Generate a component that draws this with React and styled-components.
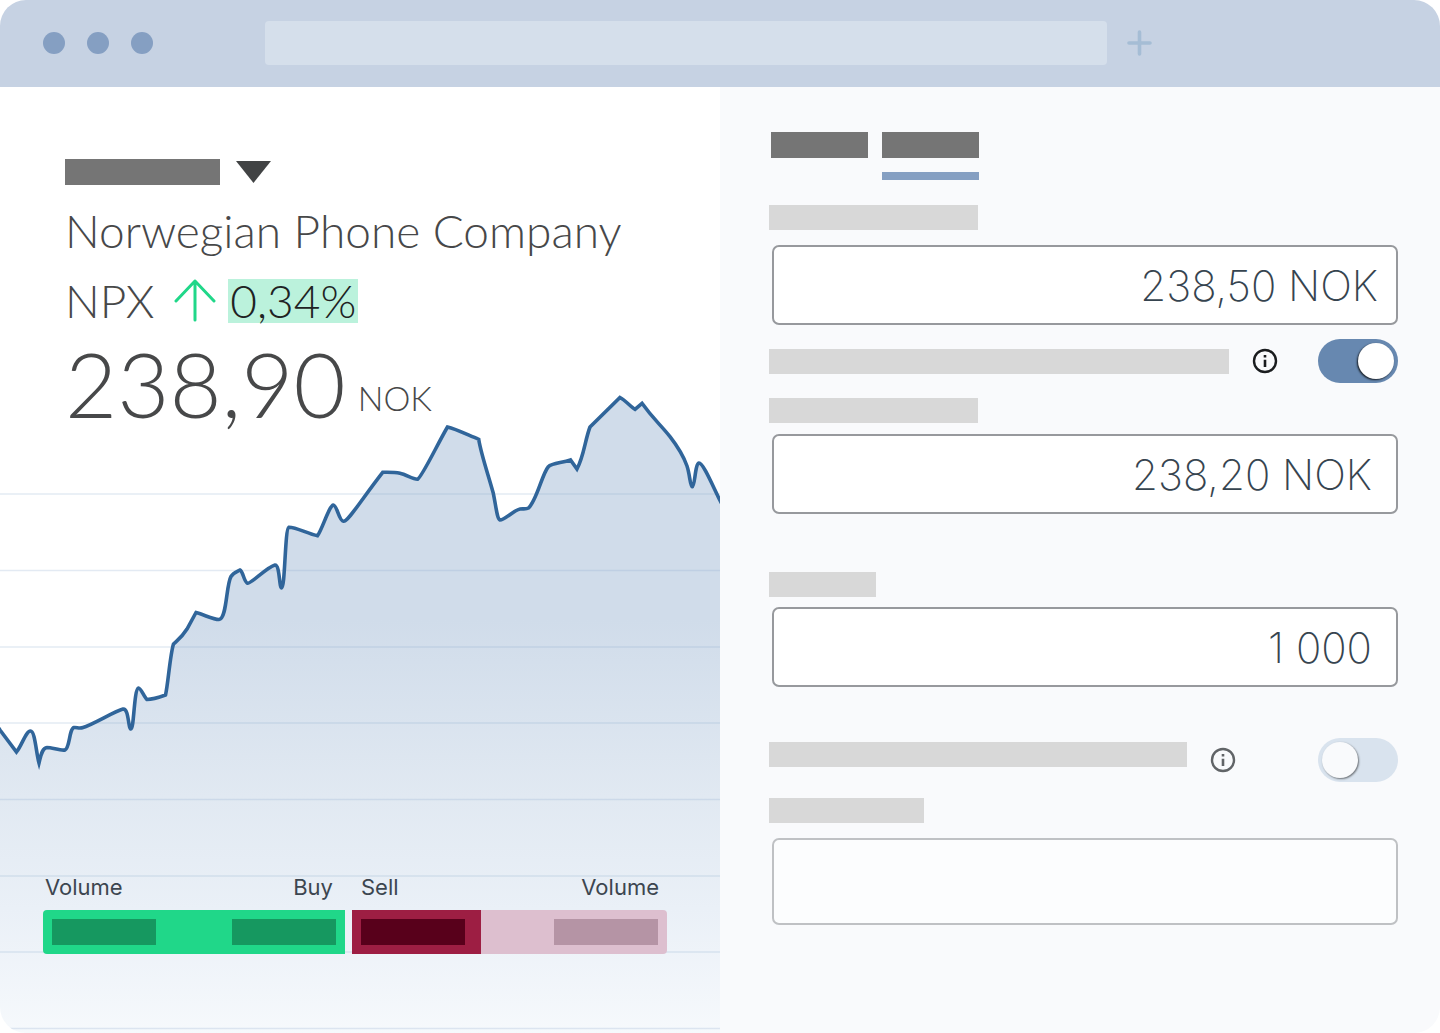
import { useState } from "react";
import styled, { createGlobalStyle } from "styled-components";

const GlobalStyle = createGlobalStyle`
  * {
    box-sizing: border-box;
  }
  body {
    margin: 0;
    background-color: #fff;
    font-family: "Inter", "Liberation Sans", sans-serif;
  }
  button {
    padding: 0;
    border: none;
    background: none;
    cursor: pointer;
  }
`;

const Window = styled.div`
  display: flex;
  flex-direction: column;
  min-height: 100vh;
  border-radius: 26px;
  overflow: hidden;
`;

/* browser bar */
const BrowserBar = styled.header`
  display: flex;
  align-items: center;
  height: 87px;
  padding: 0 20% 1px 43px;
  background-color: #c6d2e3;
`;

const Dots = styled.div`
  display: flex;
  gap: 22px;
  margin-right: 112px;
`;

const Dot = styled.span`
  width: 22px;
  height: 22px;
  border-radius: 50%;
  background-color: #859fc2;
`;

const Address = styled.input`
  flex: 1;
  min-width: 0;
  height: 44px;
  margin-right: 20px;
  padding: 0 16px;
  border: none;
  border-radius: 4px;
  background-color: #d5dfeb;
`;

const NewTab = styled.button`
  display: flex;
`;

const Main = styled.main`
  flex: 1;
  display: grid;
  grid-template-columns: 1fr 1fr;
`;

/* left side */
const StockPanel = styled.section`
  position: relative;
  display: flex;
  flex-direction: column;
  justify-content: space-between;
  padding: 72px 53px 79px 43px;
  background-color: #fff;
`;

const Chart = styled.svg`
  position: absolute;
  inset: 0;
  width: 100%;
  height: 100%;
`;

const StockInfo = styled.div`
  position: relative;
  padding-left: 22px;
  color: #474849;
  font-family: "Lato", sans-serif;
  font-weight: 300;
`;

const Bar = styled.span`
  display: block;
  width: ${({ $width }) => $width}px;
  height: 26px;
  background-color: ${({ $color }) => $color || "#757575"};
`;

const Picker = styled.button`
  display: flex;
  align-items: center;
  gap: 16px;
`;

const Name = styled.h1`
  margin: 16px 0 0;
  font-size: 46px;
  line-height: 60px;
  font-weight: 300;
  white-space: nowrap;
`;

const Change = styled.div`
  display: flex;
  align-items: center;
  margin-top: 18px;
  font-size: 46px;
  line-height: 44px;
`;

const Arrow = styled.svg`
  margin: 0 12px 0 20px;
`;

const Percent = styled.span`
  padding: 0 2px;
  background-color: #bbf2dc;
  color: #202223;
`;

const Price = styled.div`
  display: flex;
  align-items: flex-end;
  gap: 12px;
  margin-top: 12px;
  font-size: 90px;
  line-height: 96px;
  white-space: nowrap;
`;

const Currency = styled.span`
  font-size: 34px;
  line-height: 66px;
`;

const OrderBook = styled.div`
  position: relative;
  display: grid;
  grid-template-columns: 302fr 315fr;
  column-gap: 7px;
  row-gap: 10px;
  color: #3c4650;
  font-size: 22px;
  line-height: 26px;
`;

const Legend = styled.div`
  display: flex;
  justify-content: space-between;
  padding: 0 ${({ $end }) => $end}px 0 ${({ $start }) => $start}px;
`;

const Buy = styled.div`
  display: flex;
  justify-content: space-between;
  padding: 9px;
  border-radius: 4px 0 0 4px;
  background-color: #20d789;
`;

const Sell = styled.div`
  display: flex;
  justify-content: space-between;
  padding: 9px;
  border-radius: 0 4px 4px 0;
  background: linear-gradient(to right, #9d1e43 41%, #ddbfcf 41%);
`;

/* right side */
const OrderPanel = styled.form`
  padding: 45px 42px 45px 49px;
  background-color: #f9fafc;
`;

const Tabs = styled.div`
  display: flex;
  gap: 14px;
  padding-left: 2px;
`;

const Tab = styled.button`
  height: 48px;
  padding-bottom: 14px;
  border-bottom: 8px solid ${({ $active }) => ($active ? "#859fc2" : "transparent")};
`;

const Label = styled.label`
  display: block;
  width: ${({ $width }) => $width}px;
  height: 25px;
  margin-bottom: ${({ $raised }) => ($raised ? 12 : 0)}px;
  background-color: #d8d8d8;
`;

const Field = styled.div`
  display: flex;
  flex-direction: column;
  gap: ${({ $gap }) => $gap}px;
  margin-top: ${({ $top }) => $top}px;
`;

const Input = styled.input`
  width: calc(100% - 3px);
  height: ${({ $tall }) => ($tall ? 87 : 80)}px;
  margin-left: 3px;
  padding: 0 ${({ $end }) => $end}px 0 16px;
  border: 2px solid ${({ $muted }) => ($muted ? "#bfc1c4" : "#97999d")};
  border-radius: 7px;
  background-color: ${({ $muted }) => ($muted ? "#fcfdfe" : "#fff")};
  color: #36444f;
  font-family: "Inter", sans-serif;
  font-size: 42px;
  font-weight: 200;
  text-align: right;
`;

const Row = styled.div`
  display: flex;
  align-items: center;
  margin-top: ${({ $top }) => $top}px;
`;

const InfoButton = styled.button`
  display: flex;
  margin: 0 auto 0 23px;
  color: ${({ $muted }) => ($muted ? "#616467" : "#1a1c1e")};
`;

const Switch = styled.input`
  appearance: none;
  display: flex;
  align-items: center;
  width: 80px;
  height: 44px;
  margin: 0;
  padding: 0 4px;
  border-radius: 22px;
  background-color: #d9e3ee;
  cursor: pointer;

  &::before {
    content: "";
    width: 36px;
    height: 36px;
    border-radius: 50%;
    background-color: #f9fafc;
    box-shadow: 1px 1px 2px rgba(0, 0, 0, 0.5);
  }
  &:checked {
    justify-content: flex-end;
    background-color: #6788b0;
  }
  &:checked::before {
    background-color: #fff;
    box-shadow: -1px 1px 2px rgba(0, 0, 0, 0.8);
  }
`;

const line =
  "M-2 727 L0 730 L16.5 752 C22 745 26 731 30.5 731 C35 731 36 752 39 763 C41 755 42 748 47 747.5 C52 747.5 61 751 65 750 C70 748 69 729 74 727.5 C77 727 79 729 83 727.5 C92 725 115 711 123 709 C129 708 128 729 131 729 C134 729 134 689 138.5 688 C141 688 144 697 147 699.5 C153 699.5 160 697 165.5 695 C168 685 170 655 173.5 644 C179 639 182 637 187 629 L196 612.5 C205 615 213 619.5 219 619.5 C227 619 226 585 231 576.5 C233 573 236 572 240 570 C243 571 244 582 247.5 583.3 C251 584 267 567 275 565 C280 565 279 588 281.7 588 C285 588 285 529 288.7 527.3 C296 527 308 534 317.5 535.7 C322 530 329 506 333.3 505 C337 505 339 521 343.3 521.3 C348 522 361 500 382.7 472.3 C389 472.3 394 472 400 473.3 C406 474.5 413 479.5 417.5 479.3 C422 477 437 445 447.5 427 C456 429 468 435 478.7 439.3 C481 454 488 474 493.3 493.3 C496 506 497 519 500 520 C505 520 514 510 520 509 C523 508.5 526 509.5 528.5 508 C537 500 542 474 548.3 466.7 C552 463 562 463 570.5 460 L577 469 C584 456 585 440 590 427 L620 397.5 C625 400 632 408 635 409.3 L642 403.3 C654 420 660 424 670 436.7 C678 447 683 455 687 466 C690 475 690 486 692.3 486.7 C695 486 695 464 699 463 C703 463 711 482 719.5 499.5 L723 506";

const gridLines = [494, 570.5, 647, 723, 799.5, 876, 952, 1028.5];

const PriceChart = () => (
  <Chart viewBox="0 87 720 946" preserveAspectRatio="none" aria-hidden="true">
    <defs>
      <linearGradient id="area" gradientUnits="userSpaceOnUse" x1="0" y1="620" x2="0" y2="1033">
        <stop offset="0" stopColor="#d0dcea" />
        <stop offset="0.43" stopColor="#e1e9f2" />
        <stop offset="0.7" stopColor="#eaf0f7" />
        <stop offset="1" stopColor="#f6f9fc" />
      </linearGradient>
    </defs>
    <path d={`${line} V1040 H-2 Z`} fill="url(#area)" />
    {gridLines.map((y) => (
      <path key={y} d={`M0 ${y} H720`} stroke="rgba(138, 168, 205, 0.24)" strokeWidth="1.7" />
    ))}
    <path d={line} fill="none" stroke="#30659a" strokeWidth="3.6" />
  </Chart>
);

const InfoIcon = () => (
  <svg width="26" height="26" viewBox="0 0 26 26" fill="none" stroke="currentColor">
    <circle cx="13" cy="13" r="11" strokeWidth="2.4" />
    <path d="M13 11.8 V19 M13 7 V9.5" strokeWidth="2.6" />
  </svg>
);

const Toggle = ({ id, name, width, top, muted, raised, defaultChecked }) => (
  <Row $top={top}>
    <Label htmlFor={id} aria-label={name} $width={width} $raised={raised} />
    <InfoButton type="button" aria-label={`About ${name}`} $muted={muted}>
      <InfoIcon />
    </InfoButton>
    <Switch id={id} type="checkbox" role="switch" aria-label={name} defaultChecked={defaultChecked} />
  </Row>
);

const TextField = ({ id, name, width, top, gap, ...rest }) => (
  <Field $top={top} $gap={gap}>
    <Label htmlFor={id} aria-label={name} $width={width} />
    <Input id={id} type="text" aria-label={name} {...rest} />
  </Field>
);

export default function App() {
  const [tab, setTab] = useState("sell");

  return (
    <>
      <GlobalStyle />
      <Window>
        <BrowserBar>
          <Dots>
            <Dot />
            <Dot />
            <Dot />
          </Dots>
          <Address type="text" aria-label="Address" />
          <NewTab type="button" aria-label="New tab">
            <svg width="25" height="26" viewBox="0 0 25 26" stroke="#a5bdd5" strokeWidth="3.6" strokeLinecap="round">
              <path d="M2 13 H23 M12.5 2 V24" />
            </svg>
          </NewTab>
        </BrowserBar>
        <Main>
          <StockPanel>
            <PriceChart />
            <StockInfo>
              <Picker type="button" aria-label="Choose stock" aria-haspopup="listbox">
                <Bar $width={155} />
                <svg width="35" height="22" viewBox="0 0 35 22" fill="#414344">
                  <path d="M0 0 H35 L17.5 22 Z" />
                </svg>
              </Picker>
              <Name>Norwegian Phone Company</Name>
              <Change>
                NPX
                <Arrow width="42" height="44" viewBox="0 0 42 44" fill="none" stroke="#20d789" strokeWidth="3" strokeLinecap="round" strokeLinejoin="round">
                  <path d="M21 41 V2 M2 22 L21 2 L40 22" />
                </Arrow>
                <Percent>0,34%</Percent>
              </Change>
              <Price>
                <span>238,90</span>
                <Currency>NOK</Currency>
              </Price>
            </StockInfo>
            <OrderBook>
              <Legend $start={2} $end={12}>
                <span>Volume</span>
                <span>Buy</span>
              </Legend>
              <Legend $start={9} $end={8}>
                <span>Sell</span>
                <span>Volume</span>
              </Legend>
              <Buy>
                <Bar $width={104} $color="#169860" />
                <Bar $width={104} $color="#169860" />
              </Buy>
              <Sell>
                <Bar $width={104} $color="#58001b" />
                <Bar $width={104} $color="#b594a5" />
              </Sell>
            </OrderBook>
          </StockPanel>
          <OrderPanel>
            <Tabs>
              <Tab type="button" aria-label="Buy" $active={tab === "buy"} onClick={() => setTab("buy")}>
                <Bar $width={97} />
              </Tab>
              <Tab type="button" aria-label="Sell" $active={tab === "sell"} onClick={() => setTab("sell")}>
                <Bar $width={97} />
              </Tab>
            </Tabs>
            <TextField id="trigger" name="Trigger price" width={209} top={25} gap={15} defaultValue="238,50 NOK" $end={18} />
            <Toggle id="limit-on" name="Use limit" width={460} top={14} defaultChecked />
            <TextField id="limit" name="Limit price" width={209} top={15} gap={11} defaultValue="238,20 NOK" $end={24} />
            <TextField id="amount" name="Amount" width={107} top={58} gap={10} defaultValue="1 000" $end={24} />
            <Toggle id="valid-on" name="Valid until" width={418} top={51} muted raised />
            <TextField id="valid" name="Date" width={155} top={16} gap={15} $tall $muted $end={24} />
          </OrderPanel>
        </Main>
      </Window>
    </>
  );
}
